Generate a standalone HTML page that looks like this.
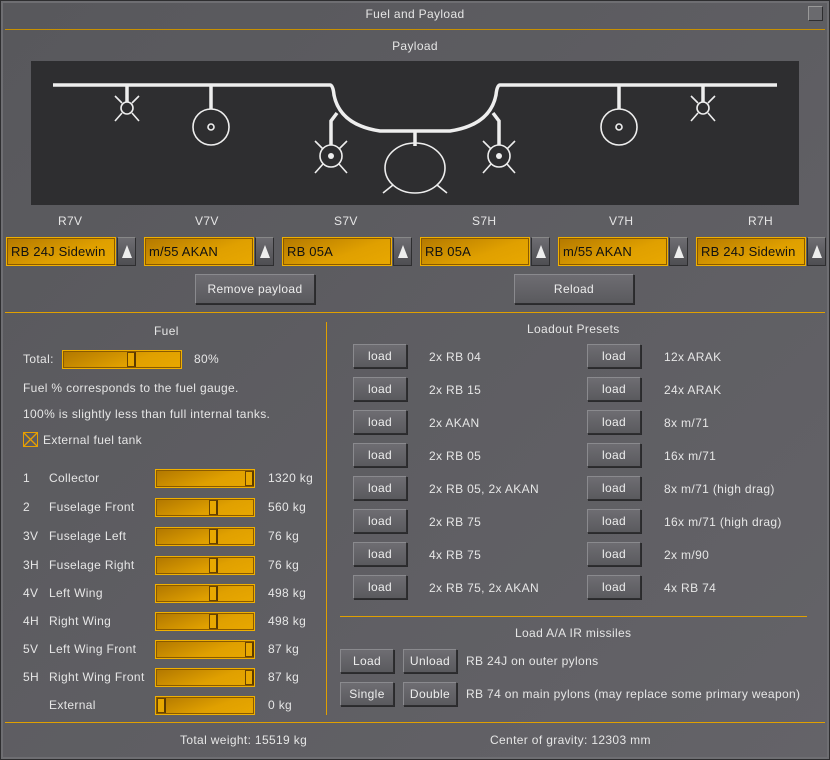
<!DOCTYPE html>
<html><head><meta charset="utf-8"><style>
*{margin:0;padding:0;box-sizing:border-box}
body{width:830px;height:760px;background:#3a3a3e;font-family:"Liberation Sans","DejaVu Sans",sans-serif;font-size:12px;letter-spacing:0.35px;color:#e6e6e6;position:relative;overflow:hidden}
#win{position:absolute;left:0;top:0;width:830px;height:760px;background:linear-gradient(135deg,#58585c,#646368);box-shadow:inset 0 0 0 1px #2e2e30,inset 0 0 0 3px #6e6e72}
.a{position:absolute;white-space:nowrap}
.hl{position:absolute;height:1px;background:#e0a000}
.vl{position:absolute;width:1px;background:#e0a000}
.btn{position:absolute;background:linear-gradient(#6e6d72,#5a5a5e);border:1px solid #2e2e30;border-top-color:#8a8a8e;border-left-color:#8a8a8e;box-shadow:1px 1px 0 #2a2a2c;color:#eee;text-align:center}
.combo{position:absolute;height:29px;width:110px;background:linear-gradient(160deg,#b37800,#e0a000 60%,#e8a800);border:1px solid #f0b000;box-shadow:inset 0 0 0 1px #8a5a00;color:#111;font-size:13px;letter-spacing:0.2px;line-height:27px;padding-left:4px}
.arr{position:absolute;width:19px;height:29px;background:linear-gradient(#6e6d72,#4e4e52);border:1px solid #2e2e30;border-top-color:#888}
.arr:after{content:"";position:absolute;left:4px;top:7px;border-left:5px solid transparent;border-right:5px solid transparent;border-bottom:13px solid #eee}
.sl{position:absolute;height:19px;background:linear-gradient(160deg,#b07600,#e0a000 60%,#e8a800);border:1px solid #f0b000;box-shadow:inset 0 0 0 1px #8a5a00}
.h{position:absolute;top:1px;width:9px;height:15px;background:#e8a800;border:1px solid #6a4400;border-right:2px solid #5a3a00}
</style></head><body><div id="win">
<div class="a" style="left:0;width:830px;text-align:center;top:7px">Fuel and Payload</div>
<div class="a" style="left:808px;top:6px;width:15px;height:15px;background:#6a6a6e;border:1px solid #2e2e30;border-top-color:#999;border-left-color:#999"></div>
<div class="hl" style="left:5px;width:820px;top:29px;background:#c89000"></div>
<div class="a" style="left:0;width:830px;text-align:center;top:39px">Payload</div>
<svg class="a" style="left:31px;top:61px" width="768" height="144" viewBox="31 61 768 144">
<rect x="31" y="61" width="768" height="144" fill="#2e2e30"/>
<g fill="none" stroke="#eee" stroke-width="3.5">
<path d="M53 85H330Q333 85 334 95Q340 125 380 131H450Q490 125 496 95Q497 85 500 85H777"/>
<path d="M127 85V102M211 85V109M415 131V146M619 85V109M703 85V102"/>
<path d="M337 113L331 121V145M493 113L499 121V145"/>
</g>
<g fill="none" stroke="#eee" stroke-width="1.6">
<circle cx="127" cy="108" r="6"/><path d="M115 96L122 103M139 96L132 103M115 121L122 113M139 121L132 113"/>
<circle cx="703" cy="108" r="6"/><path d="M691 96L698 103M715 96L708 103M691 121L698 113M715 121L708 113"/>
<circle cx="211" cy="127" r="18"/><circle cx="211" cy="127" r="3"/>
<circle cx="619" cy="127" r="18"/><circle cx="619" cy="127" r="3"/>
<circle cx="331" cy="156" r="11"/><path d="M315 141L323 149M347 141L339 149M315 173L323 164M347 173L339 164"/>
<circle cx="499" cy="156" r="11"/><path d="M483 141L491 149M515 141L507 149M483 173L491 164M515 173L507 164"/>
<ellipse cx="415" cy="168" rx="30" ry="25"/><path d="M393 185L383 193M437 185L447 193"/>
</g>
<circle cx="331" cy="156" r="3" fill="#eee"/><circle cx="499" cy="156" r="3" fill="#eee"/>
</svg>
<div class="a" style="left:58px;top:214px">R7V</div>
<div class="a" style="left:195px;top:214px">V7V</div>
<div class="a" style="left:334px;top:214px">S7V</div>
<div class="a" style="left:472px;top:214px">S7H</div>
<div class="a" style="left:609px;top:214px">V7H</div>
<div class="a" style="left:748px;top:214px">R7H</div>
<div class="combo" style="left:6px;top:237px">RB 24J Sidewin</div><div class="arr" style="left:117px;top:237px"></div>
<div class="combo" style="left:144px;top:237px">m/55 AKAN</div><div class="arr" style="left:255px;top:237px"></div>
<div class="combo" style="left:282px;top:237px">RB 05A</div><div class="arr" style="left:393px;top:237px"></div>
<div class="combo" style="left:420px;top:237px">RB 05A</div><div class="arr" style="left:531px;top:237px"></div>
<div class="combo" style="left:558px;top:237px">m/55 AKAN</div><div class="arr" style="left:669px;top:237px"></div>
<div class="combo" style="left:696px;top:237px">RB 24J Sidewin</div><div class="arr" style="left:807px;top:237px"></div>
<div class="btn" style="left:195px;top:274px;width:120px;height:30px;line-height:28px">Remove payload</div>
<div class="btn" style="left:514px;top:274px;width:120px;height:30px;line-height:28px">Reload</div>
<div class="hl" style="left:5px;width:820px;top:312px"></div>
<div class="vl" style="left:326px;top:322px;height:393px"></div>
<div class="a" style="left:154px;top:324px">Fuel</div>
<div class="a" style="left:23px;top:352px">Total:</div>
<div class="sl" style="left:62px;top:350px;width:120px"><div class="h" style="left:64px"></div></div>
<div class="a" style="left:194px;top:352px">80%</div>
<div class="a" style="left:23px;top:381px">Fuel % corresponds to the fuel gauge.</div>
<div class="a" style="left:23px;top:407px">100% is slightly less than full internal tanks.</div>
<svg class="a" style="left:23px;top:432px" width="15" height="15"><rect x="0.5" y="0.5" width="14" height="14" fill="none" stroke="#e8a000"/><path d="M1 1L14 14M14 1L1 14" stroke="#e8a000" stroke-width="1.3"/></svg>
<div class="a" style="left:43px;top:433px">External fuel tank</div>
<div class="a" style="left:23px;top:471px">1</div><div class="a" style="left:49px;top:471px">Collector</div><div class="sl" style="left:155px;top:469px;width:100px"><div class="h" style="left:89px"></div></div><div class="a" style="left:268px;top:471px">1320 kg</div>
<div class="a" style="left:23px;top:500px">2</div><div class="a" style="left:49px;top:500px">Fuselage Front</div><div class="sl" style="left:155px;top:498px;width:100px"><div class="h" style="left:53px"></div></div><div class="a" style="left:268px;top:500px">560 kg</div>
<div class="a" style="left:23px;top:529px">3V</div><div class="a" style="left:49px;top:529px">Fuselage Left</div><div class="sl" style="left:155px;top:527px;width:100px"><div class="h" style="left:53px"></div></div><div class="a" style="left:268px;top:529px">76 kg</div>
<div class="a" style="left:23px;top:558px">3H</div><div class="a" style="left:49px;top:558px">Fuselage Right</div><div class="sl" style="left:155px;top:556px;width:100px"><div class="h" style="left:53px"></div></div><div class="a" style="left:268px;top:558px">76 kg</div>
<div class="a" style="left:23px;top:586px">4V</div><div class="a" style="left:49px;top:586px">Left Wing</div><div class="sl" style="left:155px;top:584px;width:100px"><div class="h" style="left:53px"></div></div><div class="a" style="left:268px;top:586px">498 kg</div>
<div class="a" style="left:23px;top:614px">4H</div><div class="a" style="left:49px;top:614px">Right Wing</div><div class="sl" style="left:155px;top:612px;width:100px"><div class="h" style="left:53px"></div></div><div class="a" style="left:268px;top:614px">498 kg</div>
<div class="a" style="left:23px;top:642px">5V</div><div class="a" style="left:49px;top:642px">Left Wing Front</div><div class="sl" style="left:155px;top:640px;width:100px"><div class="h" style="left:89px"></div></div><div class="a" style="left:268px;top:642px">87 kg</div>
<div class="a" style="left:23px;top:670px">5H</div><div class="a" style="left:49px;top:670px">Right Wing Front</div><div class="sl" style="left:155px;top:668px;width:100px"><div class="h" style="left:89px"></div></div><div class="a" style="left:268px;top:670px">87 kg</div>
<div class="a" style="left:49px;top:698px">External</div><div class="sl" style="left:155px;top:696px;width:100px"><div class="h" style="left:1px"></div></div><div class="a" style="left:268px;top:698px">0 kg</div>
<div class="a" style="left:527px;top:322px">Loadout Presets</div>
<div class="hl" style="left:340px;width:467px;top:616px"></div>
<div class="a" style="left:515px;top:626px">Load A/A IR missiles</div>
<div class="btn" style="left:340px;top:649px;width:54px;height:24px;line-height:22px">Load</div>
<div class="btn" style="left:403px;top:649px;width:54px;height:24px;line-height:22px">Unload</div>
<div class="a" style="left:466px;top:654px">RB 24J on outer pylons</div>
<div class="btn" style="left:340px;top:682px;width:54px;height:24px;line-height:22px">Single</div>
<div class="btn" style="left:403px;top:682px;width:54px;height:24px;line-height:22px">Double</div>
<div class="a" style="left:466px;top:687px">RB 74 on main pylons (may replace some primary weapon)</div>
<div class="hl" style="left:5px;width:820px;top:722px"></div>
<div class="a" style="left:180px;top:733px">Total weight: 15519 kg</div>
<div class="a" style="left:490px;top:733px">Center of gravity: 12303 mm</div>
<div class="btn" style="left:353px;top:344px;width:54px;height:24px;line-height:22px">load</div><div class="a" style="left:429px;top:350px">2x RB 04</div>
<div class="btn" style="left:587px;top:344px;width:54px;height:24px;line-height:22px">load</div><div class="a" style="left:664px;top:350px">12x ARAK</div>
<div class="btn" style="left:353px;top:377px;width:54px;height:24px;line-height:22px">load</div><div class="a" style="left:429px;top:383px">2x RB 15</div>
<div class="btn" style="left:587px;top:377px;width:54px;height:24px;line-height:22px">load</div><div class="a" style="left:664px;top:383px">24x ARAK</div>
<div class="btn" style="left:353px;top:410px;width:54px;height:24px;line-height:22px">load</div><div class="a" style="left:429px;top:416px">2x AKAN</div>
<div class="btn" style="left:587px;top:410px;width:54px;height:24px;line-height:22px">load</div><div class="a" style="left:664px;top:416px">8x m/71</div>
<div class="btn" style="left:353px;top:443px;width:54px;height:24px;line-height:22px">load</div><div class="a" style="left:429px;top:449px">2x RB 05</div>
<div class="btn" style="left:587px;top:443px;width:54px;height:24px;line-height:22px">load</div><div class="a" style="left:664px;top:449px">16x m/71</div>
<div class="btn" style="left:353px;top:476px;width:54px;height:24px;line-height:22px">load</div><div class="a" style="left:429px;top:482px">2x RB 05, 2x AKAN</div>
<div class="btn" style="left:587px;top:476px;width:54px;height:24px;line-height:22px">load</div><div class="a" style="left:664px;top:482px">8x m/71 (high drag)</div>
<div class="btn" style="left:353px;top:509px;width:54px;height:24px;line-height:22px">load</div><div class="a" style="left:429px;top:515px">2x RB 75</div>
<div class="btn" style="left:587px;top:509px;width:54px;height:24px;line-height:22px">load</div><div class="a" style="left:664px;top:515px">16x m/71 (high drag)</div>
<div class="btn" style="left:353px;top:542px;width:54px;height:24px;line-height:22px">load</div><div class="a" style="left:429px;top:548px">4x RB 75</div>
<div class="btn" style="left:587px;top:542px;width:54px;height:24px;line-height:22px">load</div><div class="a" style="left:664px;top:548px">2x m/90</div>
<div class="btn" style="left:353px;top:575px;width:54px;height:24px;line-height:22px">load</div><div class="a" style="left:429px;top:581px">2x RB 75, 2x AKAN</div>
<div class="btn" style="left:587px;top:575px;width:54px;height:24px;line-height:22px">load</div><div class="a" style="left:664px;top:581px">4x RB 74</div>
</div></body></html>
